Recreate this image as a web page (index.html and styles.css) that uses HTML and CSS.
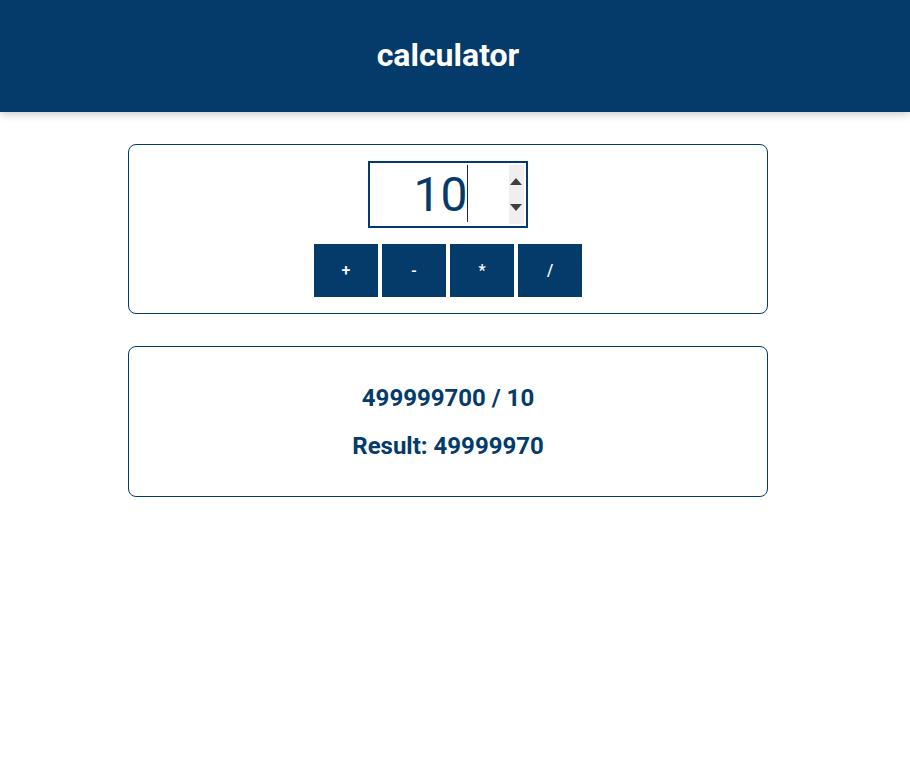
FILE: index.html
```html
<!DOCTYPE html>
<html lang="en">
<head>
<meta charset="utf-8">
<title>calculator</title>
<link rel="stylesheet" href="styles.css">
</head>
<body>
<header class="app-header">
  <h1 class="app-title">calculator</h1>
</header>
<main class="content">
  <section class="card controls">
    <div class="input-wrap">
      <input class="number-input" type="number" value="10" autofocus>
      <span class="caret"></span>
      <span class="spinner" aria-hidden="true">
        <span class="tri tri-up"></span>
        <span class="tri tri-down"></span>
      </span>
    </div>
    <div class="ops">
      <button class="op-btn" type="button">+</button>
      <button class="op-btn" type="button">-</button>
      <button class="op-btn" type="button">*</button>
      <button class="op-btn" type="button">/</button>
    </div>
  </section>
  <section class="card result">
    <h2 class="result-line">499999700 / 10</h2>
    <h2 class="result-line">Result: 49999970</h2>
  </section>
</main>
</body>
</html>
```

FILE: styles.css
```css
* { box-sizing: border-box; }

html, body {
  margin: 0;
  padding: 0;
  background: #ffffff;
  font-family: Roboto, "Liberation Sans", Arial, sans-serif;
  color: #043b6b;
}

.app-header {
  background: #043b6b;
  height: 112px;
  display: flex;
  align-items: center;
  justify-content: center;
  padding-right: 14px;
  padding-bottom: 1px;
  box-shadow: 0 2px 8px rgba(0, 0, 0, 0.22);
}

.app-title {
  margin: 0;
  color: #ffffff;
  font-size: 32px;
  font-weight: 700;
  line-height: 37px;
}

.content {
  padding-right: 14px;
  margin-top: 32px;
}

.content > .card {
  width: 640px;
  margin: 0 auto 32px;
}

.card {
  border: 1px solid #043b6b;
  border-radius: 8px;
  padding: 16px;
}

.controls {
  display: flex;
  flex-direction: column;
  align-items: center;
  gap: 16px;
}

.input-wrap {
  position: relative;
  width: 160px;
  height: 67px;
}

.number-input {
  display: block;
  width: 160px;
  height: 67px;
  border: 2px solid #043b6b;
  border-radius: 0;
  padding: 2px;
  font-family: Roboto, "Liberation Sans", Arial, sans-serif;
  font-size: 48px;
  color: #043b6b;
  text-align: center;
  background: #ffffff;
  outline: none;
  caret-color: transparent;
}

.number-input:focus { outline: none; }

.number-input::-webkit-inner-spin-button,
.number-input::-webkit-outer-spin-button {
  opacity: 0;
}

.caret {
  position: absolute;
  left: 99px;
  top: 4px;
  width: 1px;
  height: 57px;
  background: #1a2a3a;
}

.spinner {
  position: absolute;
  right: 4px;
  top: 4px;
  width: 15px;
  bottom: 4px;
  background: #efefef;
  pointer-events: none;
}

.tri {
  position: absolute;
  left: 1px;
  width: 0;
  height: 0;
  border-left: 6.5px solid transparent;
  border-right: 6.5px solid transparent;
}

.tri-up {
  top: 13px;
  border-bottom: 7px solid #3f3f3f;
}

.tri-down {
  bottom: 13px;
  border-top: 7px solid #3f3f3f;
}

.ops {
  display: flex;
  gap: 4px;
}

.op-btn {
  width: 64px;
  height: 53px;
  border: none;
  border-radius: 0;
  background: #043b6b;
  color: #ffffff;
  font-family: Roboto, "Liberation Sans", Arial, sans-serif;
  font-size: 16px;
  font-weight: 500;
  padding: 0;
}

.result {
  text-align: center;
  padding-top: 17px;
}

.result-line {
  font-size: 24px;
  font-weight: 700;
  line-height: normal;
  margin: 0.83em 0;
  color: #043b6b;
}
```
